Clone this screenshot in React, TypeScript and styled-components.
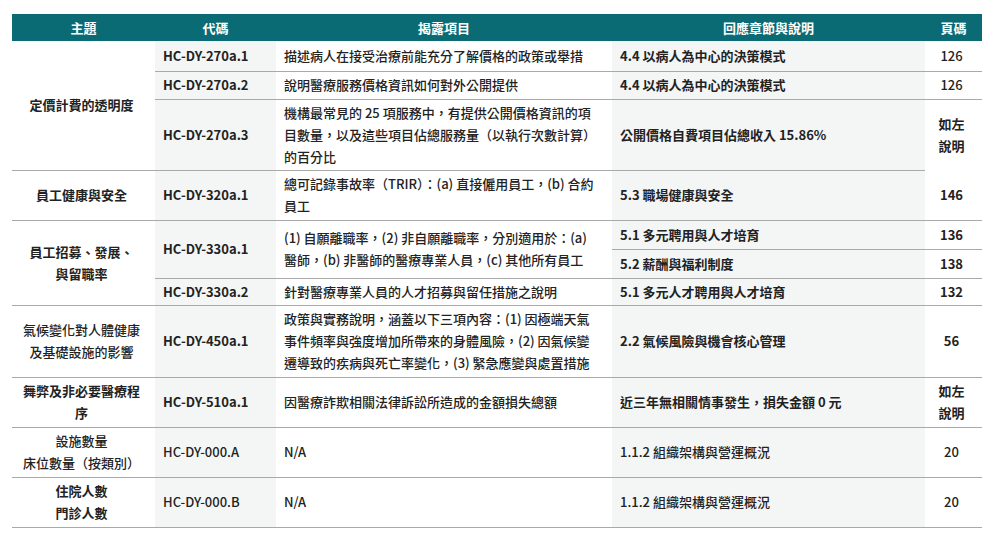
import styled, { createGlobalStyle } from 'styled-components';

const Global = createGlobalStyle`
  body { margin: 0; background: #fff; font-family: "Noto Sans CJK TC", "Noto Sans", sans-serif; color: #222; }
`;

const Wrap = styled.div`
  padding: 14px 15px 0 12px;
`;

const Table = styled.table`
  width: 970px;
  border-collapse: collapse;
  table-layout: fixed;
  font-size: 13px;
`;

const Th = styled.th`
  background: #0b6b74;
  color: #fff;
  font-weight: 700;
  font-size: 13px;
  height: 27px;
  padding: 0;
  text-align: center;
`;

const Td = styled.td<{ $shade?: boolean; $align?: string; $bold?: boolean; $noBorder?: boolean }>`
  background: ${({ $shade }) => ($shade ? '#f4f6f6' : '#fff')};
  text-align: ${({ $align }) => $align || 'left'};
  font-weight: ${({ $bold }) => ($bold ? 700 : 500)};
  border-bottom: ${({ $noBorder }) => ($noBorder ? 'none' : '1.5px solid #a9a9a9')};
  padding: 0 12px 0 8px;
  line-height: 22px;
  vertical-align: middle;
`;

const Tr = styled.tr<{ $h: number }>`
  height: ${({ $h }) => $h}px;
`;

export default function App() {
  return (
    <Wrap>
      <Global />
      <Table>
        <colgroup>
          <col style={{ width: 143 }} />
          <col style={{ width: 121 }} />
          <col style={{ width: 336 }} />
          <col style={{ width: 313 }} />
          <col style={{ width: 57 }} />
        </colgroup>
        <thead>
          <tr>
            <Th>主題</Th>
            <Th>代碼</Th>
            <Th>揭露項目</Th>
            <Th>回應章節與說明</Th>
            <Th>頁碼</Th>
          </tr>
        </thead>
        <tbody>
          <Tr $h={30}>
            <Td rowSpan={3} $align="center" $bold>定價計費的透明度</Td>
            <Td $shade $bold>HC-DY-270a.1</Td>
            <Td>描述病人在接受治療前能充分了解價格的政策或舉措</Td>
            <Td $shade $bold>4.4 以病人為中心的決策模式</Td>
            <Td $align="center">126</Td>
          </Tr>
          <Tr $h={28}>
            <Td $shade $bold>HC-DY-270a.2</Td>
            <Td>說明醫療服務價格資訊如何對外公開提供</Td>
            <Td $shade $bold>4.4 以病人為中心的決策模式</Td>
            <Td $align="center">126</Td>
          </Tr>
          <Tr $h={71}>
            <Td $shade $bold>HC-DY-270a.3</Td>
            <Td>機構最常見的 25 項服務中，有提供公開價格資訊的項目數量，以及這些項目佔總服務量（以執行次數計算）的百分比</Td>
            <Td $shade $bold>公開價格自費項目佔總收入 15.86%</Td>
            <Td $align="center" $bold $noBorder>如左<br />說明</Td>
          </Tr>
          <Tr $h={50}>
            <Td $align="center" $bold>員工健康與安全</Td>
            <Td $shade $bold>HC-DY-320a.1</Td>
            <Td>總可記錄事故率（TRIR）：(a) 直接僱用員工，(b) 合約員工</Td>
            <Td $shade $bold>5.3 職場健康與安全</Td>
            <Td $align="center" $bold>146</Td>
          </Tr>
          <Tr $h={29}>
            <Td rowSpan={3} $align="center" $bold>員工招募、發展、<br />與留職率</Td>
            <Td rowSpan={2} $shade $bold>HC-DY-330a.1</Td>
            <Td rowSpan={2}>(1) 自願離職率，(2) 非自願離職率，分別適用於：(a) 醫師，(b) 非醫師的醫療專業人員，(c) 其他所有員工</Td>
            <Td $shade $bold>5.1 多元聘用與人才培育</Td>
            <Td $align="center" $bold>136</Td>
          </Tr>
          <Tr $h={29}>
            <Td $shade $bold>5.2 薪酬與福利制度</Td>
            <Td $align="center" $bold>138</Td>
          </Tr>
          <Tr $h={27}>
            <Td $shade $bold>HC-DY-330a.2</Td>
            <Td>針對醫療專業人員的人才招募與留任措施之說明</Td>
            <Td $shade $bold>5.1 多元人才聘用與人才培育</Td>
            <Td $align="center" $bold>132</Td>
          </Tr>
          <Tr $h={72}>
            <Td $align="center">氣候變化對人體健康<br />及基礎設施的影響</Td>
            <Td $shade $bold>HC-DY-450a.1</Td>
            <Td>政策與實務說明，涵蓋以下三項內容：(1) 因極端天氣事件頻率與強度增加所帶來的身體風險，(2) 因氣候變遷導致的疾病與死亡率變化，(3) 緊急應變與處置措施</Td>
            <Td $shade $bold>2.2 氣候風險與機會核心管理</Td>
            <Td $align="center" $bold>56</Td>
          </Tr>
          <Tr $h={50}>
            <Td $align="center" $bold>舞弊及非必要醫療程序</Td>
            <Td $shade $bold>HC-DY-510a.1</Td>
            <Td>因醫療詐欺相關法律訴訟所造成的金額損失總額</Td>
            <Td $shade $bold>近三年無相關情事發生，損失金額 0 元</Td>
            <Td $align="center" $bold>如左<br />說明</Td>
          </Tr>
          <Tr $h={50}>
            <Td $align="center">設施數量<br />床位數量（按類別）</Td>
            <Td $shade>HC-DY-000.A</Td>
            <Td>N/A</Td>
            <Td $shade>1.1.2 組織架構與營運概況</Td>
            <Td $align="center">20</Td>
          </Tr>
          <Tr $h={50}>
            <Td $align="center" $bold>住院人數<br />門診人數</Td>
            <Td $shade>HC-DY-000.B</Td>
            <Td>N/A</Td>
            <Td $shade>1.1.2 組織架構與營運概況</Td>
            <Td $align="center">20</Td>
          </Tr>
        </tbody>
      </Table>
    </Wrap>
  );
}
